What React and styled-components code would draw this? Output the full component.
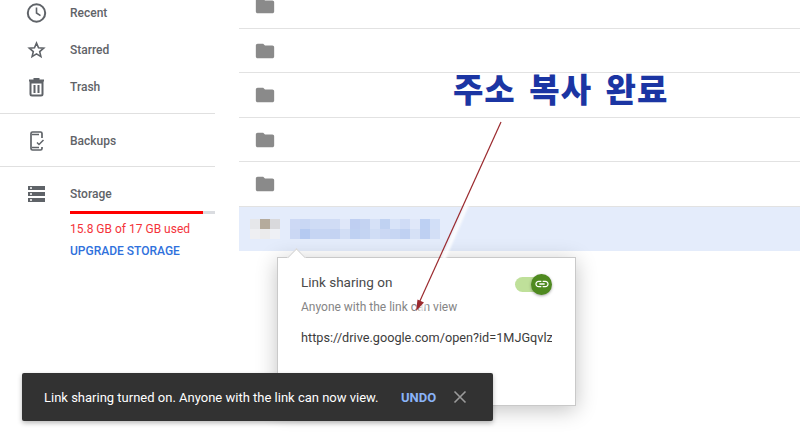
import React from 'react';
import styled, { createGlobalStyle } from 'styled-components';

const Global = createGlobalStyle`
  html, body { margin: 0; padding: 0; background: #fff; overflow: hidden; }
  #root { width: 800px; height: 442px; }
`;
const Page = styled.div`
  position: relative; width: 800px; height: 442px; overflow: hidden;
  display: flex; background: #fff; font-family: Roboto, "Liberation Sans", sans-serif;
`;
const Sidebar = styled.nav`
  width: 215px; margin-right: 24px; flex: none; margin-top: -6px;
  display: flex; flex-direction: column;
`;
const NavItem = styled.div`
  height: 37px; display: flex; align-items: center; color: #5f6368;
  font-size: 12px; font-weight: 500;
`;
const NavIcon = styled.span`
  width: 70px; padding-left: 24px; box-sizing: border-box; display: flex; flex: none;
  svg { width: 24px; height: 24px; display: block; }
`;
const Divider = styled.hr`
  border: 0; border-top: 1px solid #e0e0e0; margin: ${p => p.$top}px 0 ${p => p.$bottom}px;
`;
const StorageBar = styled.div`
  margin: -1px 0 0 70px; height: 3px; background: #dadce0;
`;
const StorageFill = styled.div`height: 100%; background: #f00;`;
const Used = styled.div`
  margin: 8px 0 0 70px; font-size: 12px; line-height: 14px; color: #f4333a;
`;
const Upgrade = styled.div`
  margin: 8px 0 0 70px; font-size: 12px; line-height: 14px; font-weight: 500; color: #2f71dc;
`;
const Main = styled.main`
  flex: 1; margin-top: -16px; display: flex; flex-direction: column;
`;
const Row = styled.div`
  height: 44.5px; box-sizing: border-box; display: flex; align-items: center;
  padding-left: 16px; border-bottom: 1px solid #e2e2e2;
  background: #fff;
  ${p => p.$selected && 'background: #e4ecfb; border-bottom-color: #e4ecfb; padding: 2px 0 0 11px;'}
`;
const FolderIcon = styled.svg`width: 22px; height: 22px; fill: #8a8a8a; display: block; margin: 1px 0 0 -1px;`;
const Mosaic = styled.div`
  display: grid; grid-template-columns: repeat(${p => p.$cols}, 10px); grid-auto-rows: 10px;
  margin-left: ${p => p.$offset || 0}px;
`;
const Cell = styled.i`display: block; background: ${p => p.$c};`;

const Popup = styled.section`
  position: absolute; left: 277px; top: 257px; width: 299px; height: 149px; box-sizing: border-box;
  background: #fff; border: 1px solid #c9c9c9; padding: 14px 23px 0;
  box-shadow: 0 4px 20px rgba(0,0,0,.24);
`;
const Notch = styled.div`
  position: absolute; left: 12px; top: -7px; width: 12px; height: 12px;
  transform: rotate(45deg); background: #fff; border-left: 1px solid #d6d6d6; border-top: 1px solid #d6d6d6;
`;
const PopupHead = styled.div`display: flex; justify-content: space-between; align-items: center; height: 19px;`;
const PopupTitle = styled.div`font-size: 13.5px; color: #4a4a4a; line-height: 16px;`;
const Switch = styled.div`
  position: relative; width: 36px; height: 15px; border-radius: 8px; background: #bfe09a; margin: 5px 1px 0 0;
`;
const Knob = styled.div`
  position: absolute; right: -1px; top: -3px; width: 21px; height: 21px; border-radius: 50%;
  background: #4f8a20; display: flex; align-items: center; justify-content: center;
  box-shadow: 0 1px 3px rgba(0,0,0,.35);
  svg { width: 16px; height: 16px; fill: #fff; display: block; }
`;
const PopupSub = styled.div`font-size: 12px; color: #858585; line-height: 14px; margin-top: 9px;`;
const LinkText = styled.div`
  font-size: 12.7px; color: #3c3c3c; line-height: 16px; margin-top: 16px; width: 251px; overflow: hidden; white-space: nowrap;
`;
const Toast = styled.div`
  position: absolute; left: 22px; top: 373px; width: 471px; height: 48px; box-sizing: border-box;
  background: #323232; border-radius: 2px; display: flex; align-items: center; padding-left: 22px;
  box-shadow: 0 2px 5px rgba(0,0,0,.28); color: #fff; font-size: 13px; font-weight: 400;
`;
const ToastText = styled.span`width: 357px; flex: none; white-space: nowrap;`;
const Undo = styled.span`color: #8ab4f8; font-weight: 700; font-size: 13px; width: 53px; flex: none;`;
const Close = styled.svg`width: 14px; height: 14px; stroke: #9b9b9b; stroke-width: 1.6; fill: none; display: block; margin-left: -1px;`;
const Caption = styled.div`
  position: absolute; left: 453px; top: 65px; font-family: "Noto Sans CJK KR", sans-serif; font-weight: 900;
  font-size: 33px; line-height: 46px; letter-spacing: 1px; color: #1b35a3; white-space: nowrap; word-spacing: 5px;
`;
const ArrowLayer = styled.svg`position: absolute; left: 0; top: 0; width: 800px; height: 442px; pointer-events: none;`;

const folder = 'M10 4H4c-1.1 0-2 .9-2 2v12c0 1.1.9 2 2 2h16c1.1 0 2-.9 2-2V8c0-1.1-.9-2-2-2h-8l-2-2z';
const thumb = ['#e6e7ea','#b5ab9c','#d9d9dc','#eeeff2','#ebebec','#eef0f5'];
const name = [
 '#cdd9f5','#c9d7f4','#cfdcf5','#d0dcf5','#d0dcf5','#dfe7f9','#bfcff2','#c4d3f2','#d6e1f7','#c0d2f2','#d8e3f8','#d0dcf6','#e0e8f9','#bdd0f3','#d2dff7',
 '#cbd8f4','#b5caf1','#c6d5f3','#c6d5f3','#c4d3f2','#d2def5','#bfd1f2','#c4d4f2','#d0ddf5','#cbd8f4','#c7d6f3','#c0d1f2','#d6e1f6','#bed0f2','#d3dff6'
];

const Folder = () => (
  <FolderIcon viewBox="0 0 24 24"><path d={folder} /></FolderIcon>
);
const stroke = { fill: 'none', stroke: '#5f6368', strokeWidth: 2 };

export default function App() {
  return (
    <Page>
      <Global />
      <Sidebar>
        <NavItem>
          <NavIcon><svg viewBox="0 0 24 24"><circle cx="12.500" cy="12" r="8.700" {...stroke} /><path d="M12.500 6.500V12l4 2.600" {...stroke} strokeWidth="1.600" /></svg></NavIcon>Recent
        </NavItem>
        <NavItem>
          <NavIcon><svg viewBox="0 0 24 24"><path d="M12.500 5l2 4.800 5.200.4-4 3.400 1.200 5-4.400-2.700-4.400 2.700 1.200-5-4-3.400 5.200-.4z" {...stroke} strokeWidth="1.600" /></svg></NavIcon>Starred
        </NavItem>
        <NavItem>
          <NavIcon><svg viewBox="0 0 24 24"><path d="M6.500 7.500h12V19a1.500 1.500 0 0 1-1.500 1.500H8A1.500 1.500 0 0 1 6.500 19zM5 5.500h15M9.500 4h6M10.500 10v8M14.500 10v8" {...stroke} /></svg></NavIcon>Trash
        </NavItem>
        <Divider $top={8} $bottom={8} />
        <NavItem>
          <NavIcon><svg viewBox="0 0 24 24"><path d="M18 9V4.500A1.500 1.500 0 0 0 16.500 3h-8A1.500 1.500 0 0 0 7 4.500v15A1.500 1.500 0 0 0 8.500 21h8a1.500 1.500 0 0 0 1.500-1.500V18M8 5.500h7M8 18.500h7" {...stroke} strokeWidth="1.700" /><path d="M13 13.500l2 2 4.500-4.500" {...stroke} strokeWidth="1.500" /></svg></NavIcon>Backups
        </NavItem>
        <Divider $top={7} $bottom={8} />
        <NavItem>
          <NavIcon><svg viewBox="0 0 24 24"><path fill="#5f6368" d="M4 4h17v4H4zm2 1.300v1.400h2V5.300zM4 10h17v4H4zm2 1.300v1.400h2v-1.400zM4 16h17v4H4zm2 1.300v1.400h2v-1.400z" fillRule="evenodd" /></svg></NavIcon>Storage
        </NavItem>
        <StorageBar><StorageFill style={{ width: '92%' }} /></StorageBar>
        <Used>15.8 GB of 17 GB used</Used>
        <Upgrade>UPGRADE STORAGE</Upgrade>
      </Sidebar>
      <Main>
        {[0, 1, 2, 3, 4].map(i => <Row key={i}><Folder /></Row>)}
        <Row $selected>
          <Mosaic $cols={3}>{thumb.map((c, i) => <Cell key={i} $c={c} />)}</Mosaic>
          <Mosaic $cols={15} $offset={10}>{name.map((c, i) => <Cell key={i} $c={c} />)}</Mosaic>
        </Row>
      </Main>
      <Popup>
        <Notch />
        <PopupHead>
          <PopupTitle>Link sharing on</PopupTitle>
          <Switch><Knob><svg viewBox="0 0 24 24"><path d="M3.900 12c0-1.710 1.390-3.100 3.100-3.100h4V7H7c-2.760 0-5 2.240-5 5s2.240 5 5 5h4v-1.900H7c-1.710 0-3.100-1.390-3.100-3.100zM8 13h8v-2H8v2zm9-6h-4v1.900h4c1.710 0 3.100 1.390 3.100 3.100s-1.390 3.100-3.100 3.100h-4V17h4c2.760 0 5-2.240 5-5s-2.240-5-5-5z" /></svg></Knob></Switch>
        </PopupHead>
        <PopupSub>Anyone with the link can view</PopupSub>
        <LinkText>https://drive.google.com/open?id=1MJGqvlz</LinkText>
      </Popup>
      <Toast>
        <ToastText>Link sharing turned on. Anyone with the link can now view.</ToastText>
        <Undo>UNDO</Undo>
        <Close viewBox="0 0 14 14"><path d="M1.500 1.500l11 11M12.500 1.500l-11 11" /></Close>
      </Toast>
      <Caption>주소 복사 완료</Caption>
      <ArrowLayer viewBox="0 0 800 442">
        <defs><filter id="halo" x="-20%" y="-5%" width="140%" height="110%"><feGaussianBlur stdDeviation="1" /></filter></defs>
        <path d="M502 124L420 313" stroke="#fff" strokeWidth="4" fill="none" opacity=".85" filter="url(#halo)" />
        <path d="M501 122L419 303" stroke="#9b2a2e" strokeWidth="1.200" fill="none" />
        <path d="M416 311L417.500 299.500L424 302.500z" fill="#9b2a2e" />
      </ArrowLayer>
    </Page>
  );
}
